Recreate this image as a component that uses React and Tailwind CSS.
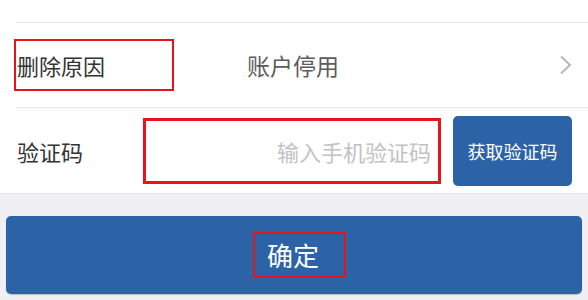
export default function App() {
  const font = { fontFamily: '"Noto Sans CJK SC", "Noto Sans", sans-serif' };
  return (
    <div className="w-[588px] h-[300px] bg-[#efeff4] overflow-hidden" style={font}>
      <div className="bg-white">
        <div className="h-[22px]" />
        <div className="ml-[16px] border-t border-[#e6e6e6]" />
        <div className="h-[84px] flex items-center pl-[14px] pr-[16px]">
          <div className="w-[160px] h-[52px] border-2 border-[#e8141b] flex items-center pl-px text-[22px] text-[#333333] leading-none">
            删除原因
          </div>
          <div className="ml-[73px] text-[23px] text-[#5c5c5c] leading-none">账户停用</div>
          <div className="ml-auto mr-[-1px]">
            <svg width="14" height="20" viewBox="0 0 14 20" fill="none">
              <path d="M2 1.5 L11 10 L2 18.5" stroke="#b8b8b8" strokeWidth="2" />
            </svg>
          </div>
        </div>
        <div className="ml-[16px] border-t border-[#e6e6e6]" />
        <div className="h-[85px] flex items-center pl-[17px] pr-[16px]">
          <div className="w-[126px] text-[22px] text-[#333333] leading-none">验证码</div>
          <div className="w-[298px] h-[66px] border-[3px] border-[#e8141b] flex items-center justify-end pr-[7px] text-[22px] text-[#c2c2c2] leading-none">
            输入手机验证码
          </div>
          <button className="ml-[12px] w-[119px] h-[70px] rounded-[5px] bg-[#2c63a6] text-white text-[18px] leading-none">
            获取验证码
          </button>
        </div>
      </div>
      <div className="border-t border-[#e3e3e8]" />
      <div className="pt-[22px] px-[6px]">
        <button className="w-full h-[78px] rounded-[5px] bg-[#2c63a6] flex items-center pl-[247px] shadow-[0_1px_1px_rgba(0,0,0,0.2)]">
          <span className="w-[93px] h-[46px] border-2 border-[#e8141b] flex items-center pl-[12px] text-white text-[26px] leading-none">
            确定
          </span>
        </button>
      </div>
    </div>
  );
}
